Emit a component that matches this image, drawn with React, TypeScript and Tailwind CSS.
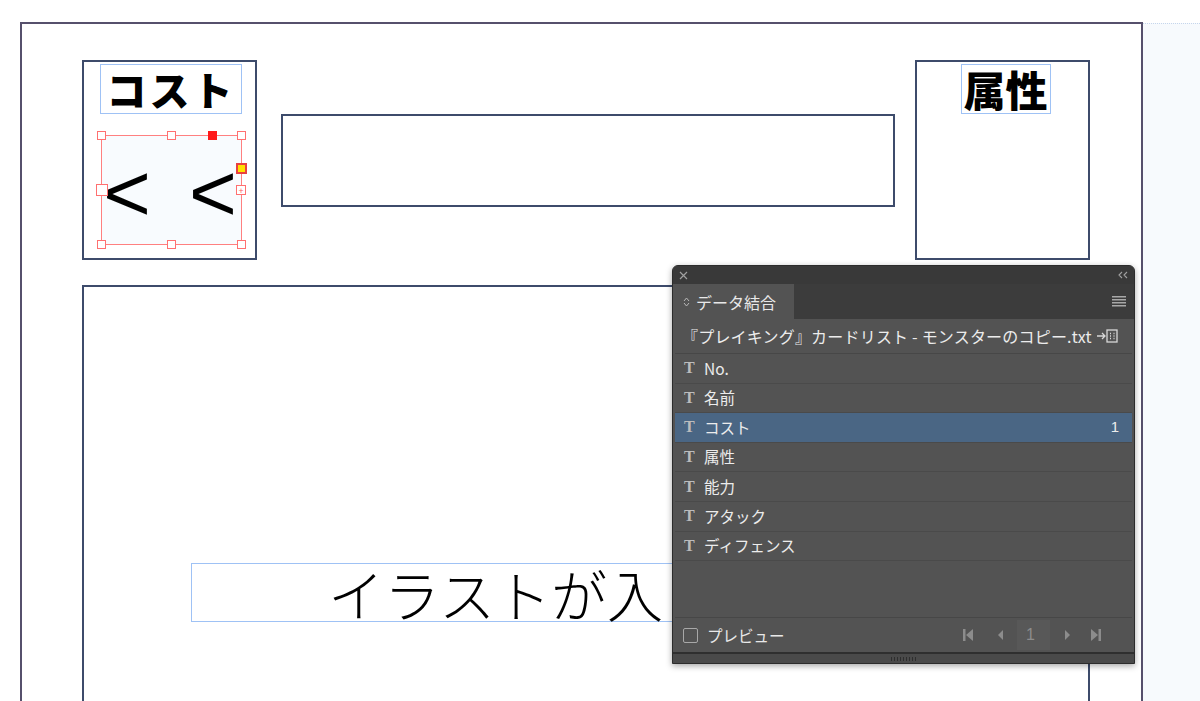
const jp = "font-['Noto_Sans_CJK_JP','Noto_Sans',sans-serif]";

const fields = ["No.", "名前", "コスト", "属性", "能力", "アタック", "ディフェンス"];

function Handle({ className }: { className: string }) {
  return <div className={"absolute w-[9px] h-[9px] bg-white border border-[#ff7070] " + className} />;
}

function SelectionFrame() {
  return (
    <div className="relative mt-[21px] ml-[17px] w-[141px] h-[110px] border border-[#ff8080] bg-[#f8fbfe]">
      <div className="flex items-center h-full pl-[1px] gap-[38px] pt-[6px]">
        <span className="font-['Liberation_Sans',sans-serif] text-[82px] leading-none text-black font-light">&lt;</span>
        <span className="font-['Liberation_Sans',sans-serif] text-[82px] leading-none text-black font-light">&lt;</span>
      </div>
      <Handle className="-left-[5px] -top-[5px]" />
      <Handle className="left-[65px] -top-[5px]" />
      <Handle className="-right-[5px] -top-[5px]" />
      <div className="absolute left-[106px] -top-[5px] w-[9px] h-[9px] bg-[#ff1a1a]" />
      <div className="absolute -right-[6px] top-[27px] w-[11px] h-[11px] bg-[#ffe000] border-2 border-[#e84040]" />
      <div className="absolute -left-[6px] top-[48px] w-[12px] h-[12px] bg-white border border-[#ff7070]" />
      <div className="absolute -right-[5px] top-[49px] w-[10px] h-[10px] bg-white border border-[#ff7070] flex items-center justify-center text-[9px] leading-none text-[#ff6060]">+</div>
      <Handle className="-left-[5px] -bottom-[5px]" />
      <Handle className="left-[65px] -bottom-[5px]" />
      <Handle className="-right-[5px] -bottom-[5px]" />
    </div>
  );
}

function NavIcon({ kind }: { kind: "first" | "prev" | "next" | "last" }) {
  return (
    <svg width="12" height="14" viewBox="0 0 12 14" fill="#8c8c8c">
      {kind === "first" && (
        <>
          <rect x="1" y="1" width="2.5" height="12" />
          <path d="M11 1 L4 7 L11 13 Z" />
        </>
      )}
      {kind === "prev" && <path d="M8 2 L3 7 L8 12 Z" />}
      {kind === "next" && <path d="M4 2 L9 7 L4 12 Z" />}
      {kind === "last" && (
        <>
          <path d="M1 1 L8 7 L1 13 Z" />
          <rect x="8.5" y="1" width="2.5" height="12" />
        </>
      )}
    </svg>
  );
}

function DataMergePanel() {
  return (
    <div className={"absolute left-[672px] top-[265px] w-[463px] h-[399px] rounded-t-[6px] bg-[#535353] border border-[#2c2c2c] shadow-[0_2px_6px_rgba(0,0,0,0.35)] flex flex-col overflow-hidden " + jp}>
      <div className="h-[18px] bg-[#393939] flex items-center justify-between px-[6px] shrink-0">
        <svg width="9" height="9" viewBox="0 0 9 9" stroke="#a0a0a0" strokeWidth="1.2">
          <path d="M1 1 L8 8 M8 1 L1 8" />
        </svg>
        <svg width="10" height="8" viewBox="0 0 10 8" fill="none" stroke="#a0a0a0" strokeWidth="1.1">
          <path d="M4 1 L1 4 L4 7 M9 1 L6 4 L9 7" />
        </svg>
      </div>
      <div className="h-[35px] bg-[#3c3c3c] flex items-stretch shrink-0">
        <div className="w-[121px] bg-[#535353] flex items-center pl-[10px] gap-[6px]">
          <svg width="7" height="12" viewBox="0 0 7 12" fill="none" stroke="#b8b8b8" strokeWidth="1">
            <path d="M1 5 L3.5 2 L6 5 M1 7 L3.5 10 L6 7" />
          </svg>
          <span className="text-[16px] text-[#e8e8e8]">データ結合</span>
        </div>
        <div className="flex-1 flex items-center justify-end pr-[8px]">
          <svg width="14" height="11" viewBox="0 0 14 11" fill="#a8a8a8">
            <rect x="0" y="0" width="14" height="1.5" />
            <rect x="0" y="3" width="14" height="1.5" />
            <rect x="0" y="6" width="14" height="1.5" />
            <rect x="0" y="9" width="14" height="1.5" />
          </svg>
        </div>
      </div>
      <div className="h-[34px] flex items-center pl-[9px] pr-[16px] shrink-0">
        <span className="text-[16px] text-[#ececec] tracking-[0.2px] flex-1">『プレイキング』カードリスト - モンスターのコピー.txt</span>
        <svg width="21" height="14" viewBox="0 0 21 14" fill="none" stroke="#d8d8d8" strokeWidth="1.3">
          <path d="M0 7 H8 M5 4 L8 7 L5 10" />
          <rect x="10" y="1" width="10" height="12" />
          <path d="M13 4.5 h1 M16.5 4.5 h1 M13 7 h1 M16.5 7 h1 M13 9.5 h1 M16.5 9.5 h1" strokeWidth="1.4" />
        </svg>
      </div>
      <div className="mx-[2px] border-t border-[#474747] flex flex-col shrink-0">
        {fields.map((f, i) => (
          <div
            key={f}
            className={
              "h-[29.6px] flex items-center pl-[9px] pr-[13px] border-b border-[#4a4a4a] " +
              (i === 2 ? "bg-[#4a6684]" : "")
            }
          >
            <span className="w-[20px] font-['Liberation_Serif',serif] font-bold text-[16px] text-[#bcbcbc] leading-none">T</span>
            <span className="text-[15.5px] text-[#ececec] flex-1">{f}</span>
            {i === 2 && <span className="text-[15px] text-[#ececec] font-['Liberation_Sans',sans-serif]">1</span>}
          </div>
        ))}
      </div>
      <div className="mx-[2px] h-[57px] border-b border-[#474747] shrink-0" />
      <div className="h-[34px] flex items-center pl-[10px] pr-[32px] shrink-0">
        <div className="w-[15px] h-[15px] border-[1.5px] border-[#a8a8a8] rounded-[2px]" />
        <span className="ml-[9px] text-[15.5px] text-[#e8e8e8]">プレビュー</span>
        <div className="ml-auto flex items-center">
          <NavIcon kind="first" />
          <div className="ml-[21px]"><NavIcon kind="prev" /></div>
          <div className="ml-[10px] w-[33px] h-[30px] bg-[#585858] flex items-center pl-[9px] text-[16px] text-[#8c8c8c] font-['Liberation_Sans',sans-serif]">1</div>
          <div className="ml-[11px]"><NavIcon kind="next" /></div>
          <div className="ml-[17px]"><NavIcon kind="last" /></div>
        </div>
      </div>
      <div className="flex-1 border-t-2 border-[#2f2f2f] bg-[#4a4a4a] flex items-center justify-center">
        <div className="w-[26px] h-[4px] bg-[repeating-linear-gradient(90deg,#2e2e2e_0_1px,transparent_1px_3px)]" />
      </div>
    </div>
  );
}

export default function App() {
  return (
    <div className="relative w-[1200px] h-[701px] overflow-hidden bg-white flex">
      <div className="w-[1143px] shrink-0 pt-[22px] pl-[20px]">
        <div className="h-[700px] border-t-2 border-l-2 border-r-2 border-[#56506c] pl-[60px] pt-[36px]">
          <div className="flex items-start">
            <div className="w-[175px] h-[200px] border-2 border-[#3d4b6b] flex flex-col">
              <div className={"mt-[2px] ml-[16px] w-[142px] h-[50px] border border-[#9fc2f5] flex items-center justify-center text-[40px] font-black leading-none text-black tracking-[3px] " + jp}>
                コスト
              </div>
              <SelectionFrame />
            </div>
            <div className="ml-[24px] mt-[54px] w-[614px] h-[93px] border-2 border-[#3d4b6b]" />
            <div className="ml-[20px] w-[175px] h-[200px] border-2 border-[#3d4b6b] flex flex-col items-center">
              <div className={"mt-[2px] ml-[6px] w-[90px] h-[50px] border border-[#9fc2f5] flex items-center justify-center text-[42px] font-black leading-none text-black " + jp}>
                属性
              </div>
            </div>
          </div>
          <div className="mt-[25px] w-[1008px] h-[500px] border-2 border-[#3d4b6b] pt-[276px] pl-[107px]">
            <div className={"w-[800px] h-[59px] border border-[#9fc2f5] flex items-center pl-[136px] text-[56px] font-light leading-none text-black " + jp}>
              イラストが入
            </div>
          </div>
        </div>
      </div>
      <div className="flex-1 pt-[23px]">
        <div className="h-full bg-[#f7fafd] border-t border-dotted border-[#c6d6ec]" />
      </div>
      <DataMergePanel />
    </div>
  );
}
